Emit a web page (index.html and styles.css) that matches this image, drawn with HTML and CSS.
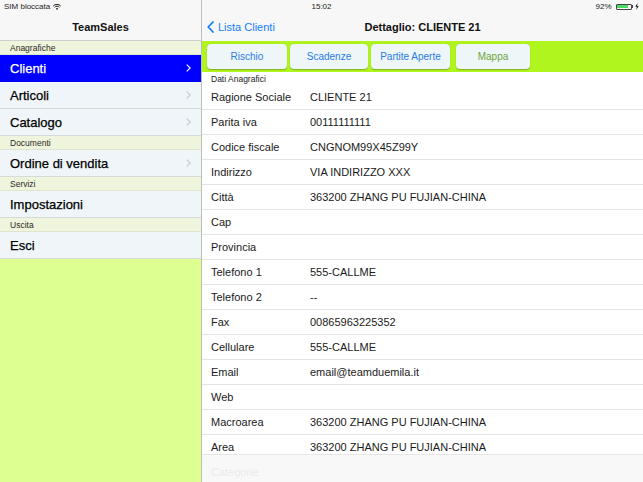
FILE: index.html
```html
<!DOCTYPE html>
<html>
<head>
<meta charset="utf-8">
<link rel="stylesheet" href="styles.css">
</head>
<body>
<div class="screen">
  <div class="statusbar">
    <div class="sb-left">SIM bloccata
      <svg class="wifi" width="8" height="6" viewBox="0 0 8 6"><path d="M0.3 2 A5 5 0 0 1 7.7 2" fill="none" stroke="#222" stroke-width="1"/><path d="M1.6 3.3 A3.2 3.2 0 0 1 6.4 3.3" fill="none" stroke="#222" stroke-width="1"/><path d="M4 6 L2.8 4.6 A1.7 1.7 0 0 1 5.2 4.6 Z" fill="#222"/></svg>
    </div>
    <div class="sb-time">15:02</div>
    <div class="sb-right">92%
      <span class="battery"><span class="batfill"></span></span><span class="battip"></span>
      <svg width="4" height="7" viewBox="0 0 4 7"><path d="M2.5 0 L0.3 3.8 H1.8 L1.3 7 L3.7 3 H2.2 Z" fill="#222"/></svg>
    </div>
  </div>

  <aside class="master">
    <div class="navbar"><span class="nav-title">TeamSales</span></div>
    <div class="menu">
      <div class="section">Anagrafiche</div>
      <div class="item selected"><span>Clienti</span><svg class="chev" width="5" height="8" viewBox="0 0 5 8"><path d="M0.7 0.7 L4.2 4 L0.7 7.3" fill="none" stroke-width="1.1"/></svg></div>
      <div class="item"><span>Articoli</span><svg class="chev" width="5" height="8" viewBox="0 0 5 8"><path d="M0.7 0.7 L4.2 4 L0.7 7.3" fill="none" stroke-width="1.1"/></svg></div>
      <div class="item"><span>Catalogo</span><svg class="chev" width="5" height="8" viewBox="0 0 5 8"><path d="M0.7 0.7 L4.2 4 L0.7 7.3" fill="none" stroke-width="1.1"/></svg></div>
      <div class="section">Documenti</div>
      <div class="item"><span>Ordine di vendita</span><svg class="chev" width="5" height="8" viewBox="0 0 5 8"><path d="M0.7 0.7 L4.2 4 L0.7 7.3" fill="none" stroke-width="1.1"/></svg></div>
      <div class="section">Servizi</div>
      <div class="item"><span>Impostazioni</span></div>
      <div class="section">Uscita</div>
      <div class="item"><span>Esci</span></div>
    </div>
  </aside>

  <main class="detail">
    <div class="navbar detail-nav">
      <span class="back">
        <svg width="7" height="12" viewBox="0 0 7 12"><path d="M6 1 L1.2 6 L6 11" fill="none" stroke="#157efb" stroke-width="1.8" stroke-linecap="round" stroke-linejoin="round"/></svg>
        Lista Clienti
      </span>
      <span class="nav-title center">Dettaglio: CLIENTE 21</span>
    </div>
    <div class="toolbar">
      <button class="tbtn w80">Rischio</button>
      <button class="tbtn w78">Scadenze</button>
      <button class="tbtn w79">Partite Aperte</button>
      <button class="tbtn w74 green gapl">Mappa</button>
    </div>
    <div class="dsection">Dati Anagrafici</div>
    <div class="rows">
      <div class="row"><span class="lbl">Ragione Sociale</span><span class="val">CLIENTE 21</span></div>
      <div class="row"><span class="lbl">Parita iva</span><span class="val">00111111111</span></div>
      <div class="row"><span class="lbl">Codice fiscale</span><span class="val">CNGNOM99X45Z99Y</span></div>
      <div class="row"><span class="lbl">Indirizzo</span><span class="val">VIA INDIRIZZO XXX</span></div>
      <div class="row"><span class="lbl">Città</span><span class="val">363200 ZHANG PU FUJIAN-CHINA</span></div>
      <div class="row"><span class="lbl">Cap</span><span class="val"></span></div>
      <div class="row"><span class="lbl">Provincia</span><span class="val"></span></div>
      <div class="row"><span class="lbl">Telefono 1</span><span class="val">555-CALLME</span></div>
      <div class="row"><span class="lbl">Telefono 2</span><span class="val">--</span></div>
      <div class="row"><span class="lbl">Fax</span><span class="val">00865963225352</span></div>
      <div class="row"><span class="lbl">Cellulare</span><span class="val">555-CALLME</span></div>
      <div class="row"><span class="lbl">Email</span><span class="val">email@teamduemila.it</span></div>
      <div class="row"><span class="lbl">Web</span><span class="val"></span></div>
      <div class="row"><span class="lbl">Macroarea</span><span class="val">363200 ZHANG PU FUJIAN-CHINA</span></div>
      <div class="row"><span class="lbl">Area</span><span class="val">363200 ZHANG PU FUJIAN-CHINA</span></div>
      <div class="row"><span class="lbl">Categorie</span><span class="val"></span></div>
    </div>
    <div class="bottombar"></div>
  </main>
</div>
</body>
</html>
```

FILE: styles.css
```css
* { box-sizing: border-box; }
html, body { margin: 0; padding: 0; }
body {
  font-family: "Liberation Sans", Arial, sans-serif;
  color: #111;
  width: 643px;
  height: 482px;
  overflow: hidden;
  background: #fff;
}
.screen {
  position: relative;
  width: 643px;
  height: 482px;
  display: grid;
  grid-template-columns: 202px 441px;
  overflow: hidden;
}
.statusbar {
  position: absolute;
  left: 0; top: 0;
  width: 643px;
  height: 13px;
  font-size: 8px;
  color: #222;
  z-index: 5;
}
.sb-left {
  position: absolute;
  left: 4px; top: 2px;
  display: flex; align-items: center; gap: 3px;
}
.sb-time {
  position: absolute;
  left: 0; right: 0; top: 2px;
  text-align: center;
}
.sb-right {
  position: absolute;
  right: 4px; top: 2px;
  display: flex; align-items: center;
}
.battery {
  display: inline-block;
  margin-left: 4px;
  width: 16px; height: 6px;
  border: 0.8px solid #444;
  border-radius: 1px;
  padding: 0.5px;
}
.batfill { display: block; width: 88%; height: 100%; background: #4cd964; }
.battip { display: inline-block; width: 1.5px; height: 3px; background: #444; margin-right: 2px; }

.master {
  background: #ddff92;
  border-right: 1px solid #bdbdbd;
  display: flex;
  flex-direction: column;
}
.navbar {
  flex-shrink: 0;
  height: 41px;
  padding-top: 13px;
  background: #f7f7f7;
  border-bottom: 1px solid #cfcfcf;
  display: flex;
  align-items: center;
  justify-content: center;
  position: relative;
}
.nav-title {
  font-size: 11px;
  font-weight: bold;
  color: #111;
}
.menu { display: flex; flex-direction: column; flex-shrink: 0; }
.section {
  flex-shrink: 0;
  height: 14px;
  background: #eef5dc;
  font-size: 8.5px;
  color: #2a2a2a;
  padding-left: 10px;
  display: flex;
  align-items: center;
  border-bottom: 1px solid #dfe6cf;
}
.item {
  flex-shrink: 0;
  height: 27px;
  background: #eff5f9;
  border-bottom: 1px solid #d5dbd9;
  font-size: 13px;
  color: #000;
  padding: 0 10px 0 10px;
  display: flex;
  align-items: center;
  justify-content: space-between;
  -webkit-text-stroke: 0.25px #000;
}
.item.selected {
  background: #0000ff;
  color: #fff;
  border-bottom-color: #0000ff;
  -webkit-text-stroke: 0.25px #fff;
}
.chev { stroke: #c4c8cc; flex-shrink: 0; }
.item.selected .chev { stroke: #fff; }

.detail {
  position: relative;
  background: #fff;
  display: flex;
  flex-direction: column;
  overflow: hidden;
}
.detail-nav { justify-content: flex-start; border-bottom: none; }
.back {
  display: flex;
  align-items: center;
  gap: 4px;
  margin-left: 5px;
  font-size: 11px;
  color: #157efb;
}
.nav-title.center {
  position: absolute;
  left: 0; right: 0;
  top: 13px; bottom: 0;
  display: flex;
  align-items: center;
  justify-content: center;
  pointer-events: none;
}
.toolbar {
  flex-shrink: 0;
  height: 31px;
  background: #b1f51e;
  display: flex;
  align-items: center;
  padding-left: 5px;
  gap: 3px;
}
.tbtn {
  height: 25px;
  border: none;
  border-radius: 4px;
  background: #eef6f8;
  box-shadow: 0 0.5px 1px rgba(80,110,40,0.5);
  font-family: "Liberation Sans", Arial, sans-serif;
  font-size: 10px;
  color: #2a7be4;
  padding: 0;
}
.w80 { width: 80px; }
.w78 { width: 78px; }
.w79 { width: 79px; }
.w74 { width: 74px; }
.gapl { margin-left: 3px; }
.tbtn.green { color: #6ea43b; }
.dsection {
  flex-shrink: 0;
  height: 13px;
  font-size: 8.5px;
  color: #222;
  padding-left: 9px;
  display: flex;
  align-items: center;
  background: #fff;
}
.rows { display: flex; flex-direction: column; flex-shrink: 0; }
.row {
  height: 25px;
  flex-shrink: 0;
  display: flex;
  align-items: center;
  font-size: 11px;
  color: #1a1a1a;
  padding-left: 9px;
  border-bottom: 1px solid #e4e4e4;
}
.lbl { width: 99px; }
.bottombar {
  position: absolute;
  left: 0; right: 0; bottom: 0;
  height: 28px;
  background: rgba(247,247,247,0.93);
  border-top: 1px solid #e6e6e6;
}
```
